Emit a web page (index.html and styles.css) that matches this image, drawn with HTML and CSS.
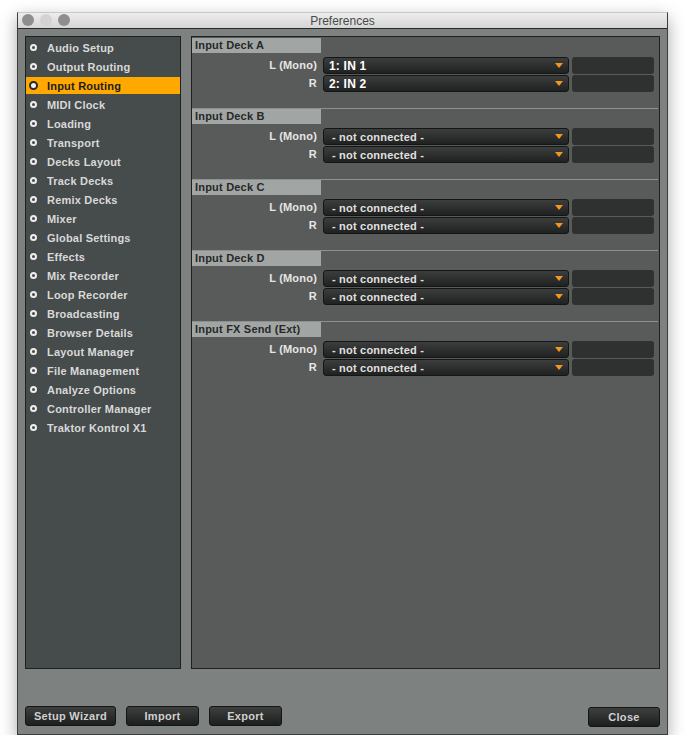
FILE: index.html
```html
<!DOCTYPE html>
<html lang="en">
  <head>
    <meta charset="UTF-8" />
    <meta name="viewport" content="width=device-width, initial-scale=1.0" />
    <title>Preferences</title>
    <link rel="stylesheet" href="styles.css">
  </head>
  <body>
    <div class="window">
      <div class="titlebar">
        <div class="lights">
          <span class="light"></span>
          <span class="light"></span>
          <span class="light"></span>
        </div>
        <span class="title">Preferences</span>
      </div>

      <div class="content">
        <div class="main">
          <ul class="sidebar">
            <li class="item"><span class="dot"></span>Audio Setup</li>
            <li class="item"><span class="dot"></span>Output Routing</li>
            <li class="item selected"><span class="dot"></span>Input Routing</li>
            <li class="item"><span class="dot"></span>MIDI Clock</li>
            <li class="item"><span class="dot"></span>Loading</li>
            <li class="item"><span class="dot"></span>Transport</li>
            <li class="item"><span class="dot"></span>Decks Layout</li>
            <li class="item"><span class="dot"></span>Track Decks</li>
            <li class="item"><span class="dot"></span>Remix Decks</li>
            <li class="item"><span class="dot"></span>Mixer</li>
            <li class="item"><span class="dot"></span>Global Settings</li>
            <li class="item"><span class="dot"></span>Effects</li>
            <li class="item"><span class="dot"></span>Mix Recorder</li>
            <li class="item"><span class="dot"></span>Loop Recorder</li>
            <li class="item"><span class="dot"></span>Broadcasting</li>
            <li class="item"><span class="dot"></span>Browser Details</li>
            <li class="item"><span class="dot"></span>Layout Manager</li>
            <li class="item"><span class="dot"></span>File Management</li>
            <li class="item"><span class="dot"></span>Analyze Options</li>
            <li class="item"><span class="dot"></span>Controller Manager</li>
            <li class="item"><span class="dot"></span>Traktor Kontrol X1</li>
          </ul>

          <div class="panel">
            <div class="section">
              <div class="section-head">Input Deck A</div>
              <div class="row">
                <span class="label">L (Mono)</span>
                <div class="select"><span class="value strong">1: IN 1</span><span class="arrow"></span></div>
                <div class="slot"></div>
              </div>
              <div class="row">
                <span class="label">R</span>
                <div class="select"><span class="value strong">2: IN 2</span><span class="arrow"></span></div>
                <div class="slot"></div>
              </div>
            </div>

            <div class="section">
              <div class="section-head">Input Deck B</div>
              <div class="row">
                <span class="label">L (Mono)</span>
                <div class="select"><span class="value">- not connected -</span><span class="arrow"></span></div>
                <div class="slot"></div>
              </div>
              <div class="row">
                <span class="label">R</span>
                <div class="select"><span class="value">- not connected -</span><span class="arrow"></span></div>
                <div class="slot"></div>
              </div>
            </div>

            <div class="section">
              <div class="section-head">Input Deck C</div>
              <div class="row">
                <span class="label">L (Mono)</span>
                <div class="select"><span class="value">- not connected -</span><span class="arrow"></span></div>
                <div class="slot"></div>
              </div>
              <div class="row">
                <span class="label">R</span>
                <div class="select"><span class="value">- not connected -</span><span class="arrow"></span></div>
                <div class="slot"></div>
              </div>
            </div>

            <div class="section">
              <div class="section-head">Input Deck D</div>
              <div class="row">
                <span class="label">L (Mono)</span>
                <div class="select"><span class="value">- not connected -</span><span class="arrow"></span></div>
                <div class="slot"></div>
              </div>
              <div class="row">
                <span class="label">R</span>
                <div class="select"><span class="value">- not connected -</span><span class="arrow"></span></div>
                <div class="slot"></div>
              </div>
            </div>

            <div class="section last">
              <div class="section-head">Input FX Send (Ext)</div>
              <div class="row">
                <span class="label">L (Mono)</span>
                <div class="select"><span class="value">- not connected -</span><span class="arrow"></span></div>
                <div class="slot"></div>
              </div>
              <div class="row">
                <span class="label">R</span>
                <div class="select"><span class="value">- not connected -</span><span class="arrow"></span></div>
                <div class="slot"></div>
              </div>
            </div>
          </div>
        </div>

        <div class="footer">
          <button class="btn wide">Setup Wizard</button>
          <button class="btn">Import</button>
          <button class="btn">Export</button>
          <button class="btn close">Close</button>
        </div>
      </div>
    </div>
  </body>
</html>
```

FILE: styles.css
```css
* {
  padding: 0;
  margin: 0;
  box-sizing: border-box;
}
body {
  background: #fff;
  font-family: "Liberation Sans", Arial, sans-serif;
  font-size: 11px;
}
.window {
  width: 651px;
  height: 723px;
  margin: 12px 0 0 17px;
  border: 1px solid #3c3c3c;
  border-top-color: #c8c8c8;
  box-shadow: 0 6px 16px rgba(0, 0, 0, 0.35);
  display: flex;
  flex-direction: column;
}
.titlebar {
  height: 17px;
  background: linear-gradient(#ededed, #d5d5d5);
  border-bottom: 1px solid #2a2a2a;
  position: relative;
  display: flex;
  align-items: center;
  justify-content: center;
}
.lights {
  position: absolute;
  left: 4px;
  top: 1px;
  display: flex;
  gap: 6px;
}
.light {
  width: 12px;
  height: 12px;
  border-radius: 50%;
  background: #8e8e91;
}
.light:nth-child(2) {
  background: #d3d3d3;
}
.title {
  font-size: 12px;
  color: #4a4a4a;
}
.content {
  flex: 1;
  background: #7d8281;
  padding: 7px;
  display: flex;
  flex-direction: column;
}
.main {
  height: 633px;
  display: flex;
  gap: 10px;
}

/* left list */
.sidebar {
  width: 156px;
  background: #464b4b;
  border: 1px solid #1f2121;
  list-style: none;
  padding-top: 2px;
}
.item {
  height: 17px;
  margin-bottom: 2px;
  display: flex;
  align-items: center;
  padding-left: 4px;
  color: #d8d9d9;
  font-weight: bold;
  letter-spacing: 0.2px;
}
.dot {
  width: 7px;
  height: 7px;
  border-radius: 50%;
  border: 2px solid #eeeeee;
  margin-right: 10px;
}
.item.selected {
  background: #ffa800;
  color: #1c1c1c;
}
.item.selected .dot {
  width: 9px;
  height: 9px;
  margin-left: -1px;
  margin-right: 9px;
  border: 2px solid #2a2a2a;
  background: #f2f2f2;
}

/* right panel */
.panel {
  flex: 1;
  background: #595b5a;
  border: 1px solid #1f2121;
  padding: 1px 1px 0 0;
}
.section {
  padding-bottom: 16px;
  border-bottom: 1px solid #8e908f;
}
.section.last {
  border-bottom: none;
}
.section-head {
  width: 129px;
  height: 15px;
  line-height: 15px;
  background: #a1a6a4;
  color: #262828;
  font-weight: bold;
  letter-spacing: 0.2px;
  padding-left: 3px;
  margin-bottom: 4px;
}
.row {
  display: flex;
  height: 17px;
  margin-bottom: 1px;
}
.row:last-child {
  margin-bottom: 0;
}
.label {
  width: 125px;
  text-align: right;
  line-height: 17px;
  color: #e6e6e6;
  font-weight: bold;
  letter-spacing: 0.2px;
}
.select {
  width: 246px;
  margin-left: 6px;
  background: linear-gradient(#3c3d3d, #202121);
  border: 1px solid #141515;
  border-radius: 3px;
  display: flex;
  align-items: center;
  justify-content: space-between;
  padding: 0 5px;
}
.value {
  color: #e0e0e0;
  font-weight: bold;
  letter-spacing: 0.2px;
  padding-left: 3px;
}
.value.strong {
  color: #fff;
  font-size: 12px;
  padding-left: 0;
}
.arrow {
  width: 0;
  height: 0;
  border-left: 4px solid transparent;
  border-right: 4px solid transparent;
  border-top: 5px solid #f5961e;
}
.slot {
  width: 82px;
  margin-left: 3px;
  background: #2f3030;
  border-radius: 3px;
}

/* bottom buttons */
.footer {
  margin-top: 37px;
  display: flex;
  gap: 10px;
}
.btn {
  height: 20px;
  width: 73px;
  background: linear-gradient(#3e3f3f, #1d1e1e);
  border: 1px solid #141515;
  border-radius: 3px;
  color: #d0d0d0;
  font-family: "Liberation Sans", Arial, sans-serif;
  font-size: 11px;
  font-weight: bold;
  letter-spacing: 0.3px;
}
.btn.wide {
  width: 91px;
}
.btn.close {
  width: 72px;
  margin-left: auto;
  margin-top: 1px;
}
```
